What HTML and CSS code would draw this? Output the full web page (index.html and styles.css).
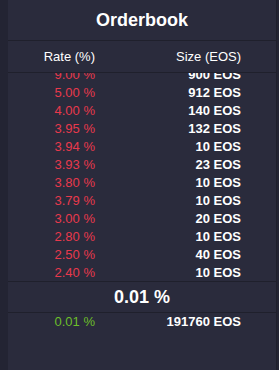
FILE: index.html
```html
<!DOCTYPE html>
<html lang="en">

<head>
    <meta charset="UTF-8">
    <meta name="viewport" content="width=device-width, initial-scale=1.0">
    <title>Orderbook</title>
    <link rel="stylesheet" href="styles.css">
</head>

<body>
    <div class="panel">
        <div class="title">Orderbook</div>
        <div class="row head">
            <span>Rate (%)</span>
            <span>Size (EOS)</span>
        </div>
        <div class="asks">
            <div class="list">
                <div class="row"><span class="rate red">9.00 %</span><span class="size">900 EOS</span></div>
                <div class="row"><span class="rate red">5.00 %</span><span class="size">912 EOS</span></div>
                <div class="row"><span class="rate red">4.00 %</span><span class="size">140 EOS</span></div>
                <div class="row"><span class="rate red">3.95 %</span><span class="size">132 EOS</span></div>
                <div class="row"><span class="rate red">3.94 %</span><span class="size">10 EOS</span></div>
                <div class="row"><span class="rate red">3.93 %</span><span class="size">23 EOS</span></div>
                <div class="row"><span class="rate red">3.80 %</span><span class="size">10 EOS</span></div>
                <div class="row"><span class="rate red">3.79 %</span><span class="size">10 EOS</span></div>
                <div class="row"><span class="rate red">3.00 %</span><span class="size">20 EOS</span></div>
                <div class="row"><span class="rate red">2.80 %</span><span class="size">10 EOS</span></div>
                <div class="row"><span class="rate red">2.50 %</span><span class="size">40 EOS</span></div>
                <div class="row"><span class="rate red">2.40 %</span><span class="size">10 EOS</span></div>
            </div>
        </div>
        <div class="mid">0.01 %</div>
        <div class="row"><span class="rate green">0.01 %</span><span class="size">191760 EOS</span></div>
    </div>
</body>

</html>
```
FILE: styles.css
```css
body {
    margin: 0;
    background-color: #232433;
    font-family: "Liberation Sans", Arial, sans-serif;
    color: #ffffff;
}

.panel {
    margin-left: 8px;
    width: 268px;
    height: 370px;
    background-color: #2a2b3c;
    border-right: 1px solid #1f202c;
}

.title {
    height: 40px;
    line-height: 40px;
    text-align: center;
    font-size: 18px;
    font-weight: bold;
    border-bottom: 1px solid #1f202c;
}

.row {
    display: grid;
    grid-template-columns: 87px 146px;
    height: 18px;
    line-height: 18px;
    font-size: 13px;
    text-align: right;
}

.head {
    height: 31px;
    line-height: 31px;
    border-bottom: 1px solid #1f202c;
}

.asks {
    height: 208px;
    overflow: hidden;
    border-bottom: 1px solid #1f202c;
}

.list {
    margin-top: -7px;
}

.size {
    font-weight: bold;
}

.red {
    color: #e8394c;
}

.green {
    color: #6cbf2a;
}

.mid {
    height: 30px;
    line-height: 30px;
    text-align: center;
    font-size: 18px;
    font-weight: bold;
    border-bottom: 1px solid #1f202c;
}
```
